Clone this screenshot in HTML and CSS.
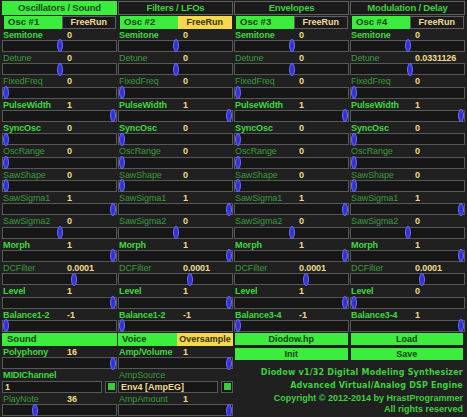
FILE: index.html
```html
<!DOCTYPE html>
<html>

<head>
  <title>Diodow</title>
  <meta charset="UTF-8">
  <link rel="stylesheet" href="styles.css">
</head>

<body>
  <div class="synth">
    <div class="panel">
      <div class="tab on">Oscillators / Sound</div>
      <div class="pair"><span class="btn green">Osc #1</span><span class="btn center">FreeRun</span></div>
      <div class="lbl b">Semitone<span class="val">0</span></div><div class="track"><i class="thumb" style="--v:.5"></i></div>
      <div class="lbl">Detune<span class="val">0</span></div><div class="track"><i class="thumb" style="--v:.5"></i></div>
      <div class="lbl">FixedFreq<span class="val">0</span></div><div class="track"><i class="thumb"></i></div>
      <div class="lbl b">PulseWidth<span class="val">1</span></div><div class="track"><i class="thumb" style="--v:1"></i></div>
      <div class="lbl b">SyncOsc<span class="val">0</span></div><div class="track"><i class="thumb"></i></div>
      <div class="lbl">OscRange<span class="val">0</span></div><div class="track"><i class="thumb"></i></div>
      <div class="lbl">SawShape<span class="val">0</span></div><div class="track"><i class="thumb"></i></div>
      <div class="lbl">SawSigma1<span class="val">1</span></div><div class="track"><i class="thumb" style="--v:1"></i></div>
      <div class="lbl">SawSigma2<span class="val">0</span></div><div class="track"><i class="thumb" style="--v:.5"></i></div>
      <div class="lbl b">Morph<span class="val">1</span></div><div class="track"><i class="thumb" style="--v:1"></i></div>
      <div class="lbl">DCFilter<span class="val">0.0001</span></div><div class="track"><i class="thumb" style="--v:.64"></i></div>
      <div class="lbl b">Level<span class="val">1</span></div><div class="track"><i class="thumb" style="--v:1"></i></div>
      <div class="lbl b">Balance1-2<span class="val">-1</span></div><div class="track"><i class="thumb"></i></div>
    </div>

    <div class="panel">
      <div class="tab">Filters / LFOs</div>
      <div class="pair"><span class="btn green">Osc #2</span><span class="btn yellow center">FreeRun</span></div>
      <div class="lbl b">Semitone<span class="val">0</span></div><div class="track"><i class="thumb" style="--v:.5"></i></div>
      <div class="lbl">Detune<span class="val">0</span></div><div class="track"><i class="thumb" style="--v:.5"></i></div>
      <div class="lbl">FixedFreq<span class="val">0</span></div><div class="track"><i class="thumb"></i></div>
      <div class="lbl b">PulseWidth<span class="val">1</span></div><div class="track"><i class="thumb" style="--v:1"></i></div>
      <div class="lbl b">SyncOsc<span class="val">0</span></div><div class="track"><i class="thumb"></i></div>
      <div class="lbl">OscRange<span class="val">0</span></div><div class="track"><i class="thumb"></i></div>
      <div class="lbl">SawShape<span class="val">0</span></div><div class="track"><i class="thumb"></i></div>
      <div class="lbl">SawSigma1<span class="val">1</span></div><div class="track"><i class="thumb" style="--v:1"></i></div>
      <div class="lbl">SawSigma2<span class="val">0</span></div><div class="track"><i class="thumb" style="--v:.5"></i></div>
      <div class="lbl b">Morph<span class="val">1</span></div><div class="track"><i class="thumb" style="--v:1"></i></div>
      <div class="lbl">DCFilter<span class="val">0.0001</span></div><div class="track"><i class="thumb" style="--v:.64"></i></div>
      <div class="lbl b">Level<span class="val">1</span></div><div class="track"><i class="thumb" style="--v:1"></i></div>
      <div class="lbl b">Balance1-2<span class="val">-1</span></div><div class="track"><i class="thumb"></i></div>
    </div>

    <div class="panel">
      <div class="tab">Envelopes</div>
      <div class="pair"><span class="btn green">Osc #3</span><span class="btn center">FreeRun</span></div>
      <div class="lbl b">Semitone<span class="val">0</span></div><div class="track"><i class="thumb" style="--v:.5"></i></div>
      <div class="lbl">Detune<span class="val">0</span></div><div class="track"><i class="thumb" style="--v:.5"></i></div>
      <div class="lbl">FixedFreq<span class="val">0</span></div><div class="track"><i class="thumb"></i></div>
      <div class="lbl b">PulseWidth<span class="val">1</span></div><div class="track"><i class="thumb" style="--v:1"></i></div>
      <div class="lbl b">SyncOsc<span class="val">0</span></div><div class="track"><i class="thumb"></i></div>
      <div class="lbl">OscRange<span class="val">0</span></div><div class="track"><i class="thumb"></i></div>
      <div class="lbl">SawShape<span class="val">0</span></div><div class="track"><i class="thumb"></i></div>
      <div class="lbl">SawSigma1<span class="val">1</span></div><div class="track"><i class="thumb" style="--v:1"></i></div>
      <div class="lbl">SawSigma2<span class="val">0</span></div><div class="track"><i class="thumb" style="--v:.5"></i></div>
      <div class="lbl b">Morph<span class="val">1</span></div><div class="track"><i class="thumb" style="--v:1"></i></div>
      <div class="lbl">DCFilter<span class="val">0.0001</span></div><div class="track"><i class="thumb" style="--v:.64"></i></div>
      <div class="lbl b">Level<span class="val">1</span></div><div class="track"><i class="thumb" style="--v:1"></i></div>
      <div class="lbl b">Balance3-4<span class="val">-1</span></div><div class="track"><i class="thumb"></i></div>
    </div>

    <div class="panel">
      <div class="tab">Modulation / Delay</div>
      <div class="pair"><span class="btn green">Osc #4</span><span class="btn center">FreeRun</span></div>
      <div class="lbl b">Semitone<span class="val">0</span></div><div class="track"><i class="thumb" style="--v:.5"></i></div>
      <div class="lbl">Detune<span class="val">0.0331126</span></div><div class="track"><i class="thumb" style="--v:.52"></i></div>
      <div class="lbl">FixedFreq<span class="val">0</span></div><div class="track"><i class="thumb"></i></div>
      <div class="lbl b">PulseWidth<span class="val">1</span></div><div class="track"><i class="thumb" style="--v:1"></i></div>
      <div class="lbl b">SyncOsc<span class="val">0</span></div><div class="track"><i class="thumb"></i></div>
      <div class="lbl">OscRange<span class="val">0</span></div><div class="track"><i class="thumb"></i></div>
      <div class="lbl">SawShape<span class="val">0</span></div><div class="track"><i class="thumb"></i></div>
      <div class="lbl">SawSigma1<span class="val">1</span></div><div class="track"><i class="thumb" style="--v:1"></i></div>
      <div class="lbl">SawSigma2<span class="val">0</span></div><div class="track"><i class="thumb" style="--v:.5"></i></div>
      <div class="lbl b">Morph<span class="val">1</span></div><div class="track"><i class="thumb" style="--v:1"></i></div>
      <div class="lbl">DCFilter<span class="val">0.0001</span></div><div class="track"><i class="thumb" style="--v:.64"></i></div>
      <div class="lbl b">Level<span class="val">0</span></div><div class="track"><i class="thumb"></i></div>
      <div class="lbl b">Balance3-4<span class="val">1</span></div><div class="track"><i class="thumb" style="--v:1"></i></div>
    </div>

    <div class="panel lower">
      <div class="pair"><span class="btn green full">Sound</span></div>
      <div class="lbl b">Polyphony<span class="val">16</span></div><div class="track"><i class="thumb" style="--v:1"></i></div>
      <div class="lbl b">MIDIChannel</div>
      <div class="field"><span class="box">1</span><span class="check"><i></i></span></div>
      <div class="lbl">PlayNote<span class="val">36</span></div><div class="track"><i class="thumb" style="--v:.27"></i></div>
    </div>

    <div class="panel lower">
      <div class="pair"><span class="btn green">Voice</span><span class="btn yellow center">Oversample</span></div>
      <div class="lbl b">Amp/Volume<span class="val">1</span></div><div class="track"><i class="thumb" style="--v:1"></i></div>
      <div class="lbl">AmpSource</div>
      <div class="field"><span class="box">Env4 [AmpEG]</span><span class="check"><i></i></span></div>
      <div class="lbl">AmpAmount<span class="val">1</span></div><div class="track"><i class="thumb" style="--v:1"></i></div>
    </div>

    <div class="info">
      <div class="buttons">
        <span class="btn green center">Diodow.hp</span>
        <span class="btn green center">Load</span>
        <span class="btn green center">Init</span>
        <span class="btn green center">Save</span>
      </div>
      <div class="about wide">Diodow v1/32 Digital Modeling Synthesizer</div>
      <div class="about wide">Advanced Virtual/Analog DSP Engine</div>
      <div class="about">Copyright © 2012-2014 by HrastProgrammer</div>
      <div class="about">All rights reserved</div>
    </div>
  </div>
</body>

</html>
```

FILE: styles.css
```css
body {
  background-color: #202020;
  font-family: "Liberation Sans", Arial, sans-serif;
  font-size: 9px;
  font-weight: bold;
  margin: 0;
  padding: 0;
}

.synth {
  display: grid;
  grid-template-columns: repeat(4, 115px);
  column-gap: 1px;
  padding: 1px 2px 0;
}

.panel {
  display: flex;
  flex-direction: column;
}

.tab {
  height: 14px;
  line-height: 12px;
  box-sizing: border-box;
  border: 1px solid #5f5f5f;
  background-color: #1b1b1b;
  color: #3fd23f;
  font-size: 9.5px;
  letter-spacing: -0.2px;
  text-align: center;
}

.tab.on {
  background-color: #3ded3d;
  border-color: #3ded3d;
  color: #1d4a1d;
}

.pair {
  display: flex;
  height: 12.67px;
  margin-top: 1px;
  padding: 0 1px 0 2px;
}

.btn {
  flex: 1;
  box-sizing: border-box;
  border: 1px solid #5f5f5f;
  background-color: #1b1b1b;
  color: #f0dc96;
  font-size: 9.5px;
  line-height: 10.67px;
  padding-left: 3px;
  white-space: nowrap;
  overflow: hidden;
}

.btn.center {
  text-align: center;
  padding-left: 0;
  font-size: 9px;
}

.btn.green {
  background-color: #3ded3d;
  border-color: #3ded3d;
  color: #1a3d1a;
}

.btn.yellow {
  background-color: #f6d84e;
  border-color: #f6d84e;
  color: #3a3008;
}

.lbl {
  display: flex;
  height: 11.33px;
  line-height: 12px;
  padding-left: 1px;
  color: #3a9a3a;
  font-weight: normal;
  letter-spacing: -0.1px;
}

.lbl.b {
  color: #40d840;
  font-weight: bold;
}

.val {
  margin-left: auto;
  width: 50px;
  color: #f0dc8c;
  font-weight: bold;
}

.track {
  position: relative;
  height: 12px;
  box-sizing: border-box;
  border: 1px solid #585858;
  background-color: #161616;
}

.thumb {
  position: absolute;
  top: -1.5px;
  left: calc((100% - 6px) * var(--v, 0));
  width: 6px;
  height: 13px;
  box-sizing: border-box;
  border-radius: 50%;
  border: 1px solid #6a6aff;
  background: radial-gradient(ellipse at center, #2a2ab8 0%, #3c3ce0 70%);
}

.lower .pair {
  margin-top: 1px;
  padding: 0;
}

.lower .lbl {
  height: 11.5px;
}

.btn.full {
  padding-left: 4px;
}

.field {
  display: flex;
  gap: 3px;
  height: 12px;
}

.field .box {
  flex: 1;
  box-sizing: border-box;
  border: 1px solid #585858;
  background-color: #161616;
  color: #f0dc8c;
  padding-left: 2px;
  line-height: 10px;
}

.field .check {
  display: flex;
  align-items: center;
  justify-content: center;
  width: 12px;
  box-sizing: border-box;
  border: 1px solid #585858;
  background-color: #161616;
}

.field .check i {
  width: 7px;
  height: 7px;
  background-color: #3acc3a;
}

.info {
  grid-column: span 2;
  display: flex;
  flex-direction: column;
  align-items: flex-end;
  padding: 1px 2px 0 0;
}

.buttons {
  display: grid;
  grid-template-columns: 1fr 1fr;
  gap: 3px 3px;
  align-self: stretch;
  padding-left: 1px;
  margin-bottom: 6px;
}

.buttons .btn {
  height: 12px;
  line-height: 10px;
  font-size: 9px;
}

.about {
  color: #3fcf3f;
  font-size: 9px;
  letter-spacing: 0;
  line-height: 11.5px;
}

.about.wide {
  font-family: "DejaVu Sans", Verdana, sans-serif;
  font-size: 8px;
  letter-spacing: 0.2px;
  line-height: 13.5px;
}
```
